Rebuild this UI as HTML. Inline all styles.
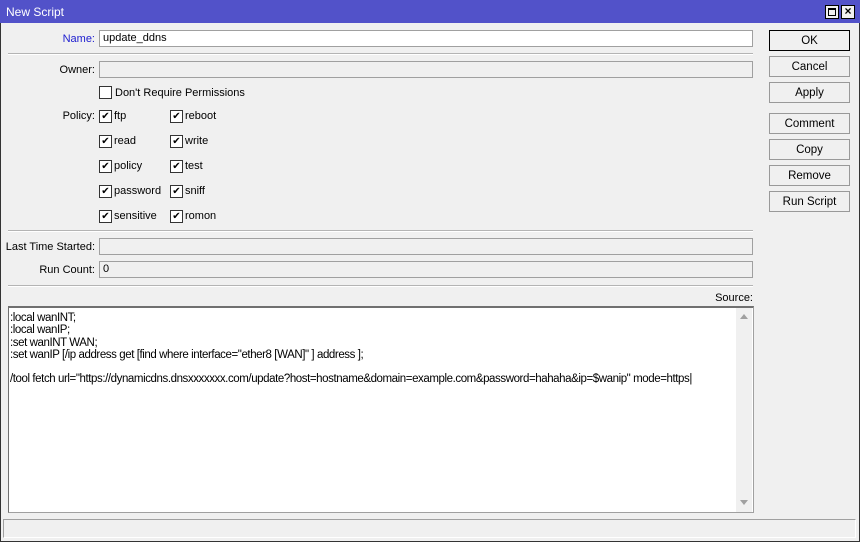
<!DOCTYPE html>
<html><head><style>
*{margin:0;padding:0;box-sizing:border-box}
body{width:860px;height:542px;background:#f0f0f0;font-family:"Liberation Sans",sans-serif;font-size:11px;color:#000;position:relative;overflow:hidden}
.a{position:absolute}
#win{position:absolute;left:0;top:0;width:860px;height:542px;border:1px solid #333;border-top:none}
#tb{left:0;top:0;width:860px;height:23px;background:#5252c9;color:#fff;font-size:12px;line-height:24px;padding-left:6px}
.tbb{top:5px;width:14px;height:14px;background:#f0f0f0;border:1px solid #000}
.lbl{text-align:right;width:95px;left:0}
.inp{left:99px;width:654px;height:17px;border:1px solid #a0a0a0;background:#f0f0f0;padding-left:3px;line-height:15px}
.sep{left:8px;width:745px;height:2px;border-top:1px solid #b4b4b4;border-bottom:1px solid #fff}
.cb{width:13px;height:13px;border:1px solid #333;background:#fff;font-size:10px;line-height:11px;text-align:center}
.btn{left:769px;width:81px;height:21px;border:1px solid #999;background:#f0f0f0;text-align:center;line-height:20px;font-size:11.5px}
</style></head><body>
<div id="win"></div>
<div class="a" id="tb">New Script</div>
<div class="a tbb" style="left:825px"><div class="a" style="left:2px;top:2px;width:8px;height:8px;border:1px solid #000;border-top-width:2px"></div></div>
<div class="a tbb" style="left:841px;font-size:12px;font-weight:bold;line-height:11px;text-align:center;color:#000">×</div>

<div class="a lbl" style="top:33px;color:#2020d0">Name:</div>
<div class="a inp" style="top:30px;background:#fff">update_ddns</div>
<div class="a sep" style="top:53px"></div>
<div class="a lbl" style="top:64px">Owner:</div>
<div class="a inp" style="top:61px"></div>
<div class="a cb" style="left:99px;top:86px"></div>
<div class="a" style="left:115px;top:87px">Don't Require Permissions</div>
<div class="a lbl" style="top:110px">Policy:</div>

<div class="a cb" style="left:99px;top:110px">✔</div><div class="a" style="left:114px;top:110px">ftp</div>
<div class="a cb" style="left:170px;top:110px">✔</div><div class="a" style="left:185px;top:110px">reboot</div>
<div class="a cb" style="left:99px;top:135px">✔</div><div class="a" style="left:114px;top:135px">read</div>
<div class="a cb" style="left:170px;top:135px">✔</div><div class="a" style="left:185px;top:135px">write</div>
<div class="a cb" style="left:99px;top:160px">✔</div><div class="a" style="left:114px;top:160px">policy</div>
<div class="a cb" style="left:170px;top:160px">✔</div><div class="a" style="left:185px;top:160px">test</div>
<div class="a cb" style="left:99px;top:185px">✔</div><div class="a" style="left:114px;top:185px">password</div>
<div class="a cb" style="left:170px;top:185px">✔</div><div class="a" style="left:185px;top:185px">sniff</div>
<div class="a cb" style="left:99px;top:210px">✔</div><div class="a" style="left:114px;top:210px">sensitive</div>
<div class="a cb" style="left:170px;top:210px">✔</div><div class="a" style="left:185px;top:210px">romon</div>

<div class="a sep" style="top:230px"></div>
<div class="a lbl" style="top:241px">Last Time Started:</div>
<div class="a inp" style="top:238px"></div>
<div class="a lbl" style="top:264px">Run Count:</div>
<div class="a inp" style="top:261px">0</div>
<div class="a sep" style="top:285px"></div>
<div class="a" style="left:700px;width:53px;text-align:right;top:292px">Source:</div>

<div class="a" style="left:8px;top:306px;width:746px;height:207px;border:1px solid #a0a0a0;border-top:2px solid #707070;border-left:1px solid #707070;background:#fff;font-size:11.5px;line-height:12.3px;padding:4px 0 0 1px;letter-spacing:-0.42px;white-space:pre">:local wanINT;
:local wanIP;
:set wanINT WAN;
:set wanIP [/ip address get [find where interface="ether8 [WAN]" ] address ];

/tool fetch url="https://dynamicdns.dnsxxxxxxx.com/update?host=hostname&amp;domain=example.com&amp;password=hahaha&amp;ip=$wanip" mode=https|</div>
<div class="a" style="left:736px;top:308px;width:16px;height:204px;background:#f0f0f0"></div>
<div class="a" style="left:740px;top:314px;width:0;height:0;border-left:4px solid transparent;border-right:4px solid transparent;border-bottom:5px solid #a0a0a0"></div>
<div class="a" style="left:740px;top:500px;width:0;height:0;border-left:4px solid transparent;border-right:4px solid transparent;border-top:5px solid #a0a0a0"></div>

<div class="a" style="left:3px;top:519px;width:853px;height:19px;border-top:1px solid #a0a0a0;border-left:1px solid #a0a0a0;border-right:1px solid #fff;border-bottom:1px solid #fff"></div>

<div class="a btn" style="top:30px;border-color:#000">OK</div>
<div class="a btn" style="top:56px">Cancel</div>
<div class="a btn" style="top:82px">Apply</div>
<div class="a btn" style="top:113px">Comment</div>
<div class="a btn" style="top:139px">Copy</div>
<div class="a btn" style="top:165px">Remove</div>
<div class="a btn" style="top:191px">Run Script</div>
</body></html>
